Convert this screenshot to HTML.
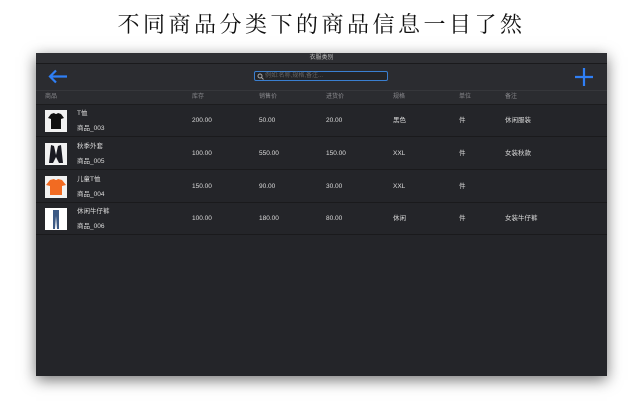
<!DOCTYPE html>
<html><head><meta charset="utf-8"><style>
body{margin:0;width:643px;height:402px;background:#fff;position:relative;overflow:hidden;font-family:"Liberation Sans","Noto Sans CJK SC",sans-serif}
.t{position:absolute;top:8px;left:0;width:643px;text-align:center;font-family:"Noto Serif CJK SC","Noto Sans CJK SC",serif;font-size:22px;letter-spacing:3.5px;color:#111}
.w{position:absolute;left:36px;top:53px;width:571px;height:323px;background:#242529;box-shadow:0 4px 14px rgba(0,0,0,.55)}
.tb{height:10px;background:#2e2f33;border-bottom:1px solid #1a1a1c;color:#bbb;font-size:6px;text-align:center;line-height:10px}
.bar{position:absolute;top:11px;left:0;right:0;height:26px;background:#2b2c30}
.s{position:absolute;left:218px;top:7px;width:134px;height:10px;border:1px solid #3a7fd0;border-radius:2px;background:#232427;color:#666;font-size:6px;line-height:8px;padding-left:10px;box-sizing:border-box}
.hd{position:absolute;top:37px;left:0;right:0;height:13px;background:#2b2c30;border-top:1px solid #36373b;border-bottom:1px solid #1c1c1e;font-size:6px;color:#8a8a8e}
.r{position:absolute;left:0;right:0;height:32px;border-bottom:1px solid #1a1a1c;font-size:6.5px;color:#ddd}
.c{position:absolute;line-height:8px;height:8px;white-space:nowrap}
.img{position:absolute;left:9px;top:6px;width:22px;height:22px;background:#f2f2f2}
</style></head><body>
<div class="t">不同商品分类下的商品信息一目了然</div>
<div class="w">
<div class="tb">衣服类别</div>
<div class="bar">
<svg style="position:absolute;left:12px;top:5px" width="20" height="15"><path d="M19 7.5H2M8 1.5L2 7.5L8 13.5" stroke="#2f7ff5" stroke-width="2.2" fill="none"/></svg>
<div class="s">例如:名称,规格,备注...</div>
<svg style="position:absolute;left:221px;top:9px" width="7" height="7"><circle cx="3" cy="3" r="2" stroke="#aaa" fill="none"/><path d="M4.5 4.5L6.5 6.5" stroke="#aaa"/></svg>
<svg style="position:absolute;left:539px;top:4px" width="18" height="18"><path d="M9 0V18M0 9H18" stroke="#2f7ff5" stroke-width="2.2"/></svg>
</div>
<div class="hd">
<span class="c" style="left:9px;top:2px">商品</span><span class="c" style="left:156px;top:2px">库存</span><span class="c" style="left:223px;top:2px">销售价</span><span class="c" style="left:290px;top:2px">进货价</span><span class="c" style="left:357px;top:2px">规格</span><span class="c" style="left:423px;top:2px">单位</span><span class="c" style="left:469px;top:2px">备注</span>
</div>
<div class="r" style="top:51px"><div class="img"><svg width="22" height="22"><path d="M6 4L9 3Q11 5 13 3L16 4L19 8L16 9V19H6V9L3 8Z" fill="#111"/></svg></div><span class="c" style="left:41px;top:6px">T恤</span><span class="c" style="left:41px;top:21px">商品_003</span><span class="c" style="left:156px;top:13px">200.00</span><span class="c" style="left:223px;top:13px">50.00</span><span class="c" style="left:290px;top:13px">20.00</span><span class="c" style="left:357px;top:13px">黑色</span><span class="c" style="left:423px;top:13px">件</span><span class="c" style="left:469px;top:13px">休闲服装</span></div>
<div class="r" style="top:84px"><div class="img"><svg width="22" height="22"><path d="M6 2L9 3L11 12L13 3L16 2L18 20H14L11 14L8 20H4Z" fill="#1a1a22"/></svg></div><span class="c" style="left:41px;top:6px">秋季外套</span><span class="c" style="left:41px;top:21px">商品_005</span><span class="c" style="left:156px;top:13px">100.00</span><span class="c" style="left:223px;top:13px">550.00</span><span class="c" style="left:290px;top:13px">150.00</span><span class="c" style="left:357px;top:13px">XXL</span><span class="c" style="left:423px;top:13px">件</span><span class="c" style="left:469px;top:13px">女装秋款</span></div>
<div class="r" style="top:117px"><div class="img"><svg width="22" height="22"><path d="M5 4L9 3Q11 5 13 3L17 4L21 9L17 10V19H5V10L1 9Z" fill="#f26b22"/></svg></div><span class="c" style="left:41px;top:6px">儿童T恤</span><span class="c" style="left:41px;top:21px">商品_004</span><span class="c" style="left:156px;top:13px">150.00</span><span class="c" style="left:223px;top:13px">90.00</span><span class="c" style="left:290px;top:13px">30.00</span><span class="c" style="left:357px;top:13px">XXL</span><span class="c" style="left:423px;top:13px">件</span></div>
<div class="r" style="top:149px"><div class="img" style="background:#fff"><svg width="22" height="22"><path d="M8 2H14L14 21H12L11 8L10 21H8Z" fill="#3d5a85"/></svg></div><span class="c" style="left:41px;top:6px">休闲牛仔裤</span><span class="c" style="left:41px;top:21px">商品_006</span><span class="c" style="left:156px;top:13px">100.00</span><span class="c" style="left:223px;top:13px">180.00</span><span class="c" style="left:290px;top:13px">80.00</span><span class="c" style="left:357px;top:13px">休闲</span><span class="c" style="left:423px;top:13px">件</span><span class="c" style="left:469px;top:13px">女装牛仔裤</span></div>
</div>
</body></html>
